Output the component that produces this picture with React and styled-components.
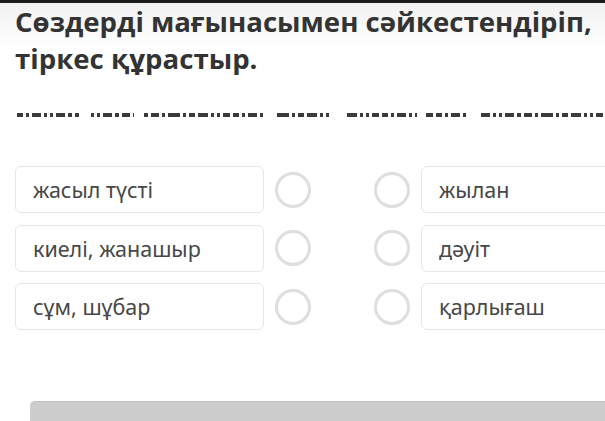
import React from "react";
import styled, { createGlobalStyle } from "styled-components";

const GlobalStyle = createGlobalStyle`
  html, body {
    margin: 0;
    padding: 0;
    background: #fff;
    overflow: hidden;
  }
  body {
    width: 605px;
    height: 421px;
    font-family: "Open Sans", "Noto Sans", sans-serif;
  }
`;

const left = ["жасыл түсті", "киелі, жанашыр", "сұм, шұбар"];
const right = ["жылан", "дәуіт", "қарлығаш"];

// the blurred line under the title: word-like groups of blocks
const groups = [
  [17, 79], [91, 134], [144, 264], [277, 329], [347, 417], [426, 469], [481, 605],
];
const widths = [6, 3, 9, 3, 3, 9, 4, 8, 3, 12, 3, 6, 10, 3, 3, 7];

function blocksFor([start, end], seed) {
  const out = [];
  let x = start;
  let i = seed;
  while (x < end) {
    const w = Math.min(widths[i % widths.length], end - x);
    out.push([x, w]);
    x += w + 3;
    i += 1;
  }
  return out;
}

export default function App() {
  const blocks = groups.flatMap((g, i) => blocksFor(g, i * 3));

  return (
    <Page>
      <GlobalStyle />
      <TopBar />
      <Header>
        <Title>
          Сөздерді мағынасымен сәйкестендіріп,
          <br />
          тіркес құрастыр.
        </Title>
      </Header>
      <Hidden width="605" height="8" viewBox="0 0 605 8">
        {blocks.map(([x, w], i) => (
          <rect key={i} x={x} y="2" width={w} height="4" fill="#3a3a3a" />
        ))}
      </Hidden>
      <Board>
        {left.map((word, i) => (
          <React.Fragment key={word}>
            <Card>{word}</Card>
            <Dot />
            <Dot />
            <Card>{right[i]}</Card>
          </React.Fragment>
        ))}
      </Board>
      <Footer>
        <Button />
      </Footer>
    </Page>
  );
}

const Page = styled.div`
  width: 605px;
  height: 421px;
  overflow: hidden;
  display: flex;
  flex-direction: column;
`;

const TopBar = styled.div`
  height: 3px;
  background: #1c1c1c;
  box-shadow: 0 2px 30px 10px rgba(0, 0, 0, 0.08);
`;

const Header = styled.div`
  background: linear-gradient(#f1f1f1, #fff 45px);
  padding: 0 0 0 15px;
`;

const Title = styled.h1`
  margin: 0;
  font-family: "Open Sans", "Noto Sans", sans-serif;
  font-weight: 700;
  font-size: 27.6px;
  line-height: 37px;
  color: #333;
  white-space: nowrap;
`;

const Hidden = styled.svg`
  display: block;
  margin-top: 34px;
`;

const Board = styled.div`
  display: grid;
  grid-template-columns: 260px 99px 47px 249px;
  row-gap: 11.5px;
  margin: 47px 0 0 15px;
  align-items: center;
`;

const Card = styled.div`
  box-sizing: border-box;
  width: 249px;
  height: 47px;
  display: flex;
  align-items: center;
  padding-left: 17px;
  border: 1px solid #e6e6e6;
  border-radius: 6px;
  background: #fff;
  font-family: "Noto Sans", "Open Sans", sans-serif;
  font-size: 21.5px;
  color: #474747;
`;

const Dot = styled.div`
  box-sizing: border-box;
  width: 36px;
  height: 36px;
  border: 3px solid #dedede;
  border-radius: 50%;
`;

const Footer = styled.div`
  flex: 1;
  display: flex;
  align-items: flex-end;
  padding-left: 30px;
`;

const Button = styled.div`
  flex: 1;
  height: 19px;
  background: #cccccc;
  border-top: 1px solid #c2c2c2;
  border-top-left-radius: 5px;
`;
